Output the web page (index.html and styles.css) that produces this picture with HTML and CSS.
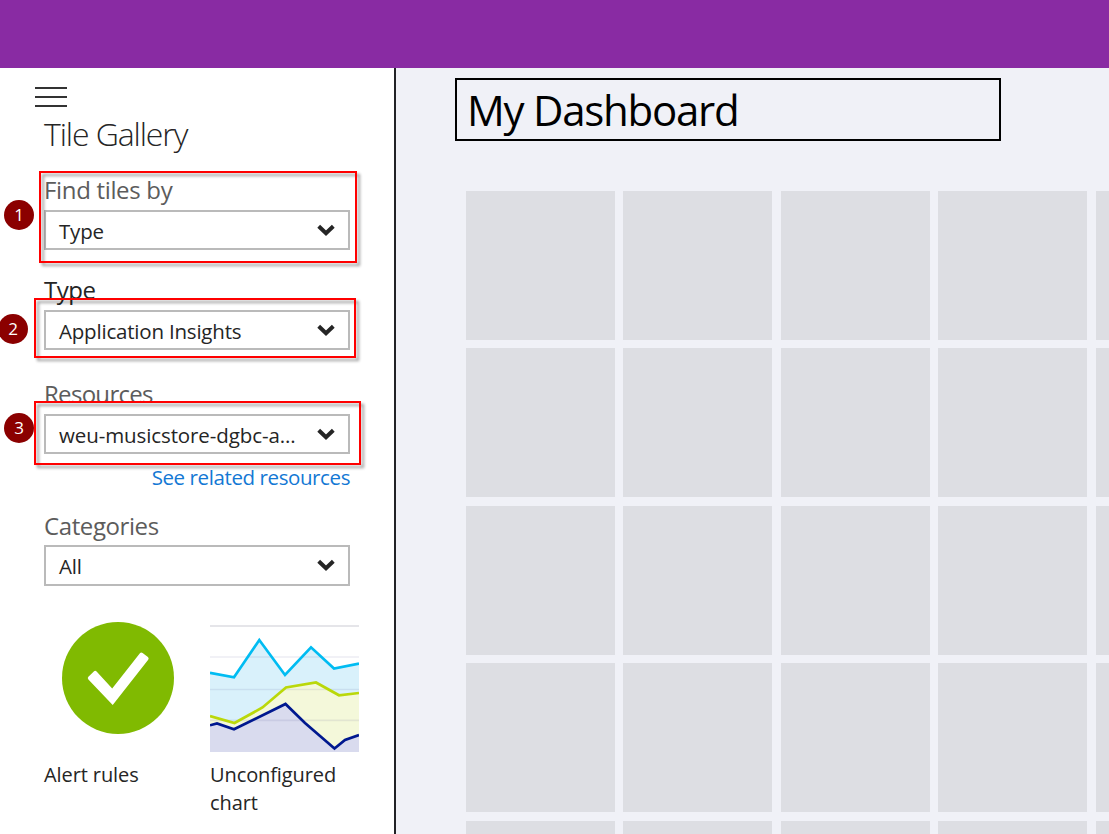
FILE: index.html
```
<!DOCTYPE html>
<html lang="en">
<head>
<meta charset="utf-8">
<title>My Dashboard</title>
<link rel="stylesheet" href="styles.css">
</head>
<body>
<div class="app">
  <header class="topbar"></header>
  <div class="workspace">
    <aside class="sidebar">
      <div class="menu"><i></i><i></i><i></i></div>
      <h1 class="heading"><span>Tile Gallery</span></h1>
      <div class="field find">
        <label class="label l-find">Find tiles by</label>
        <div class="select"><span class="s-type">Type</span><svg width="18" height="12" viewBox="0 0 18 12"><path d="M1.7 2.2 9 9.2l7.3-7"/></svg></div>
      </div>
      <div class="field type">
        <label class="label dark l-type">Type</label>
        <div class="select"><span class="s-app">Application Insights</span><svg width="18" height="12" viewBox="0 0 18 12"><path d="M1.7 2.2 9 9.2l7.3-7"/></svg></div>
      </div>
      <div class="field resources">
        <label class="label l-res">Resources</label>
        <div class="select"><span class="s-weu">weu-musicstore-dgbc-a...</span><svg width="18" height="12" viewBox="0 0 18 12"><path d="M1.7 2.2 9 9.2l7.3-7"/></svg></div>
        <a class="link"><span>See related resources</span></a>
      </div>
      <div class="field categories">
        <label class="label l-cat">Categories</label>
        <div class="select tall"><span class="s-all">All</span><svg width="18" height="12" viewBox="0 0 18 12"><path d="M1.7 2.2 9 9.2l7.3-7"/></svg></div>
      </div>
      <div class="gallery">
        <div class="item">
          <svg class="art" width="149" height="130" viewBox="0 0 149 130"><circle cx="74" cy="56" r="56" fill="#80ba01"/><path d="M44.4 54.7q-1.3 1.3 0 2.8L68.7 83l35.5-45.3q1.1-1.4-.3-2.6l-5.3-4.1q-1.6-1.1-2.7.3L68.2 66.6 52.6 49.5q-1.3-1.4-2.8-.1z" fill="#fff"/></svg>
          <span class="name n-alert">Alert rules</span>
        </div>
        <div class="item">
          <svg class="art" width="149" height="130" viewBox="0 0 149 130">
            <path d="M0 50.8 24 55.3 49.3 18 75 53 101 25.3 124 46.5 149 41.5V72L129 73.3 106 60.5 76 65.5 52.5 85.5 24.500 101 0 94z" fill="#d9f1fb"/>
            <path d="M0 94 24.500 101 52.500 85.500 76 65.500 106 60.500 129 73.300 149 71V113L135 118 124.500 126.500 95 101 75.500 82 24 107.300 7 101.500 0 103.300z" fill="#f4f8da"/>
            <path d="M0 103.300 7 101.500 24 107.300 75.500 82 95 101 124.500 126.500 135 118 149 113V130H0z" fill="#d9dbee"/>
            <path d="M0 4H149" stroke="#e5e5e9" stroke-width="2"/>
            <path d="M0 35H149M0 67.500H149M0 98.300H149" stroke="#282878" stroke-opacity=".09" stroke-width="1.700"/>
            <g fill="none" stroke-width="2.700">
              <path d="M0 50.800 24 55.300 49.300 18 75 53 101 25.300 124 46.500 149 41.500" stroke="#00bcf2"/>
              <path d="M0 94 24.500 101 52.500 85.500 76 65.500 106 60.500 129 73.300 149 71" stroke="#bad80a"/>
              <path d="M0 103.300 7 101.500 24 107.300 75.500 82 95 101 124.500 126.500 135 118 149 113" stroke="#00188f"/>
            </g>
          </svg>
          <span class="name n-chart">Unconfigured<br>chart</span>
        </div>
      </div>
    </aside>
    <main class="board">
      <div class="title"><span>My Dashboard</span></div>
      <div class="grid">
        <b></b><b></b><b></b><b></b><b></b>
        <b></b><b></b><b></b><b></b><b></b>
        <b></b><b></b><b></b><b></b><b></b>
        <b></b><b></b><b></b><b></b><b></b>
        <b></b><b></b><b></b><b></b><b></b>
      </div>
    </main>
  </div>
  <div class="mark mark1"></div>
  <div class="mark mark2"></div>
  <div class="mark mark3"></div>
  <div class="step step1">1</div>
  <div class="step step2">2</div>
  <div class="step step3">3</div>
</div>
</body>
</html>
```

FILE: styles.css
```
* { box-sizing: border-box; }
body { margin: 0; font-family: "Open Sans", "Noto Sans", sans-serif; color: #252525; }
.app { position: relative; width: 1109px; height: 834px; overflow: hidden; display: flex; flex-direction: column; }
.topbar { height: 68px; flex: none; background: #892ba3; }
.workspace { flex: 1; min-height: 0; display: flex; }
.sidebar { width: 396px; flex: none; padding: 19px 0 0 44px; background: #fff; border-right: 2px solid #222226; }
.menu { width: 32px; height: 20px; margin-left: -9px; display: flex; flex-direction: column; justify-content: space-between; }
.menu i { height: 2px; background: #333; }
.heading { margin: 6px 0 0; height: 42px; line-height: 42px; font-size: 32px; font-weight: 300; letter-spacing: -1.1px; white-space: nowrap; }
.field { width: 306px; display: flex; flex-direction: column; }
.find { margin-top: 16px; }
.type { margin-top: 22px; }
.resources { margin-top: 26px; }
.categories { margin-top: 18px; }
.label { height: 38px; line-height: 36px; font-size: 24px; color: #5c5c5c; white-space: nowrap; align-self: flex-start; }
.find .label { margin-top: 1px; }
.categories .label { height: 37px; }
.dark { color: #252525; }
.select { height: 40px; border: 2px solid #bababa; padding: 1px 13px 0 13px; display: flex; align-items: center; justify-content: space-between; font-size: 20.500px; line-height: 36px; white-space: nowrap; }
.select.tall { height: 41px; }
.select svg { margin-top: -2px; }
.select path { fill: none; stroke: #252525; stroke-width: 4; }
.link { height: 36px; line-height: 46px; align-self: flex-end; font-size: 20.500px; color: #1378d4; white-space: nowrap; }
.gallery { margin-top: 36px; display: grid; grid-template-columns: 149px 149px; gap: 17px; }
.item { display: flex; flex-direction: column; }
.art { display: block; }
.name { margin-top: 9px; align-self: flex-start; font-size: 20px; line-height: 28px; letter-spacing: -.1px; white-space: nowrap; }
.l-find { letter-spacing: -.33px; }
.l-type { letter-spacing: -.5px; }
.l-res { letter-spacing: -.7px; }
.l-cat { letter-spacing: -.4px; }
.s-app, .s-type, .s-all { letter-spacing: -.2px; }
.s-weu { letter-spacing: -.1px; }
.link span { letter-spacing: -.4px; }
.board { flex: 1; min-width: 0; padding: 10px 0 0 59px; background: #f0f1f7; overflow: hidden; }
.title { width: 546px; height: 63px; border: 2px solid #000; padding-left: 10px; font-size: 42px; line-height: 60px; letter-spacing: -1.25px; color: #000; white-space: nowrap; }
.grid { margin: 50px 0 0 11px; width: 779px; display: grid; grid-template-columns: repeat(5, 149px); grid-auto-rows: 149px; gap: 8.400px; }
.grid b { background: #dddee3; }
.mark { position: absolute; border: 2px solid #f00; filter: drop-shadow(3px 3px 1.500px rgba(0,0,0,.4)); }
.mark1 { left: 39px; top: 171px; width: 318px; height: 92px; }
.mark2 { left: 34px; top: 298px; width: 322px; height: 60px; }
.mark3 { left: 34px; top: 401px; width: 327px; height: 64px; }
.step { position: absolute; width: 30px; height: 30px; border-radius: 50%; background: #8b0000; color: #fff; font: 17px/29px "Open Sans", sans-serif; text-align: center; }
.step1 { left: 4px; top: 200px; }
.step2 { left: -2px; top: 314px; }
.step3 { left: 4px; top: 413px; }
```
